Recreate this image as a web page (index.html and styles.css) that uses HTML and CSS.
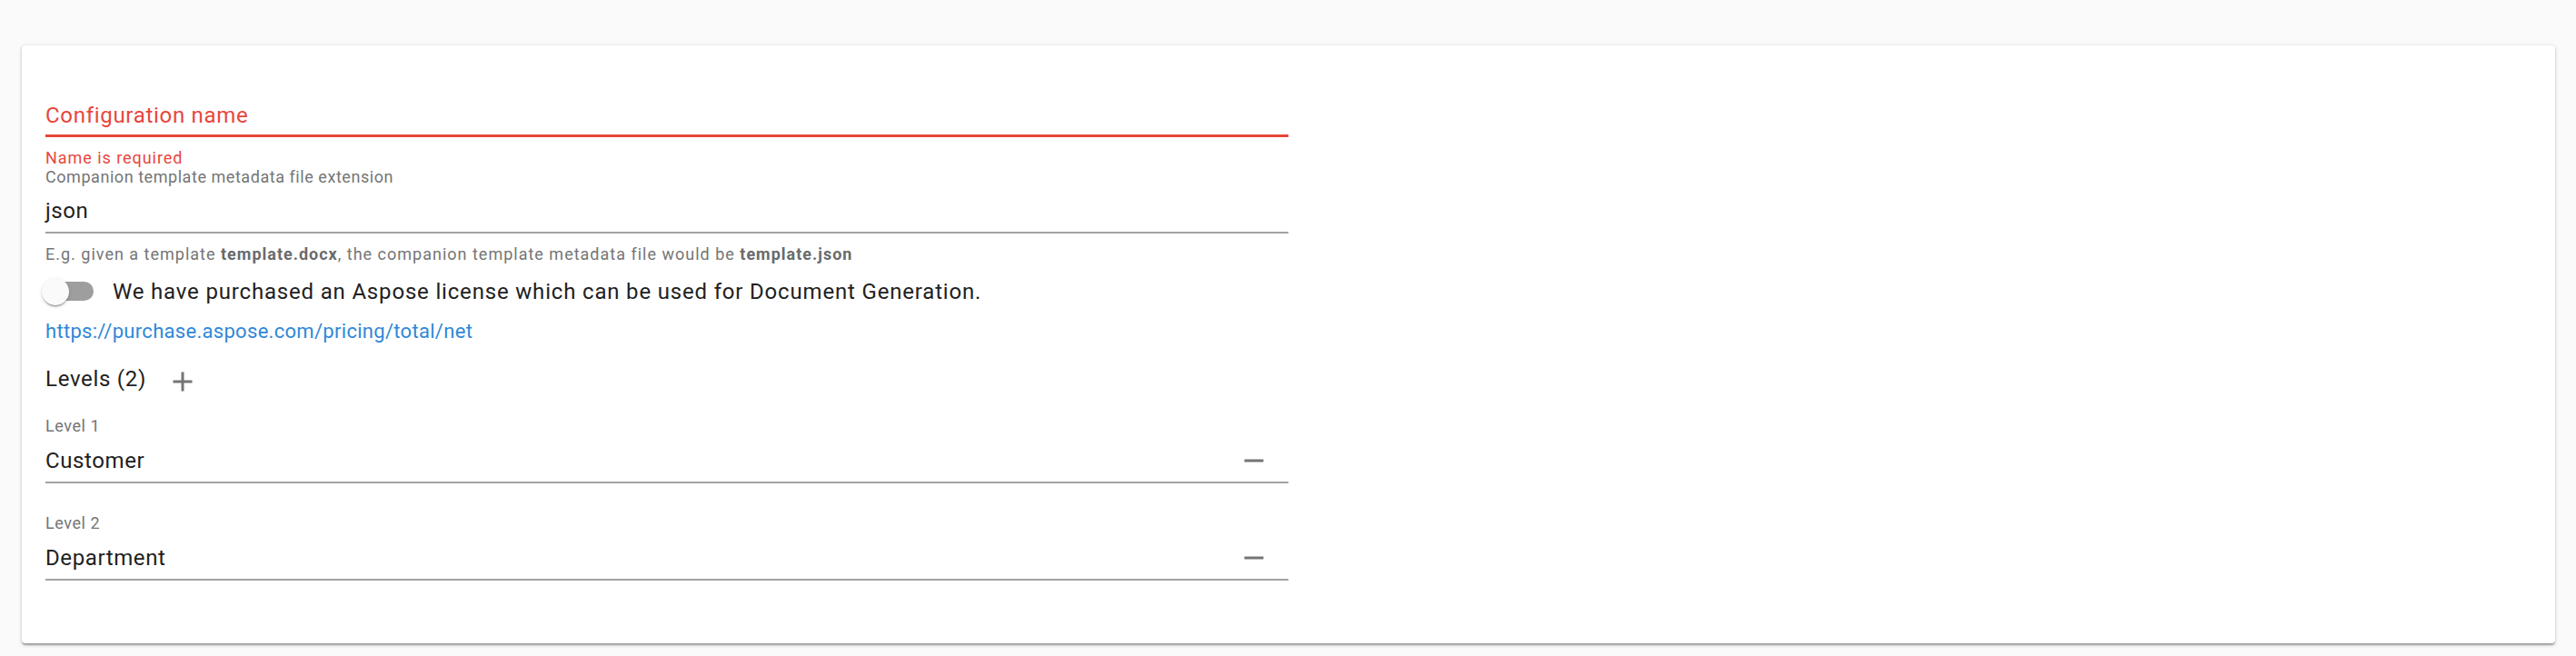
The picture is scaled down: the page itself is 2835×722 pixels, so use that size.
FILE: index.html
```html
<!DOCTYPE html>
<html lang="en">
<head>
<meta charset="utf-8">
<title>Configuration</title>
<link rel="stylesheet" href="styles.css">
</head>
<body>
<div class="page">
  <section class="card">
    <div class="field">
      <div class="input input-error">Configuration name</div>
      <div class="error-text">Name is required</div>
    </div>
    <div class="field">
      <div class="label">Companion template metadata file extension</div>
      <div class="input input-json">json</div>
      <div class="helper">E.g. given a template <b>template.docx</b>, the companion template metadata file would be <b>template.json</b></div>
    </div>
    <label class="switch-row">
      <span class="switch"><span class="track"></span><span class="thumb"></span></span>
      <span class="switch-label">We have purchased an Aspose license which can be used for Document Generation.</span>
    </label>
    <a class="link" href="#">https://purchase.aspose.com/pricing/total/net</a>
    <div class="levels-head">
      <span class="levels-title">Levels (2)</span>
      <svg class="icon icon-add" viewBox="0 0 24 24" width="36" height="36"><path d="M19 13h-6v6h-2v-6H5v-2h6V5h2v6h6v2z"/></svg>
    </div>
    <div class="level level-first">
      <div class="label">Level 1</div>
      <div class="input input-row">
        <span class="value">Customer</span>
        <svg class="icon icon-remove" viewBox="0 0 24 24" width="36" height="36"><path d="M19 13H5v-2h14v2z"/></svg>
      </div>
    </div>
    <div class="level">
      <div class="label">Level 2</div>
      <div class="input input-row">
        <span class="value">Department</span>
        <svg class="icon icon-remove" viewBox="0 0 24 24" width="36" height="36"><path d="M19 13H5v-2h14v2z"/></svg>
      </div>
    </div>
  </section>
</div>
</body>
</html>
```

FILE: styles.css
```css
* { box-sizing: border-box; }

html, body {
  margin: 0;
  padding: 0;
  background: #fafafa;
  font-family: Roboto, "Liberation Sans", Arial, sans-serif;
  color: #212121;
}

.page {
  padding: 50px 23px 14px 24px;
}

.card {
  background: #fff;
  border-radius: 4px;
  box-shadow: 0 1.5px 4.5px 0 rgba(0,0,0,0.2), 0 1.5px 1.5px 0 rgba(0,0,0,0.14), 0 3px 1.5px -1.5px rgba(0,0,0,0.12);
  padding: 62px 26px 69px 26px;
  height: 658px;
}

.field, .level {
  width: 1368px;
}

.input {
  font-size: 24px;
  line-height: 30px;
  letter-spacing: 0.6px;
  padding-bottom: 8px;
  border-bottom: 2px solid #a3a3a3;
  color: #212121;
}

.input-error {
  color: #e8463b;
  letter-spacing: 0.7px;
  padding-bottom: 6px;
  border-bottom: 3px solid #e8463b;
}

.error-text {
  margin-top: 12px;
  font-size: 18px;
  line-height: 21px;
  letter-spacing: 0.95px;
  color: #e8463b;
}

.label {
  font-size: 18px;
  line-height: 21px;
  letter-spacing: 0.55px;
  color: #757575;
}

.input-json {
  margin-top: 12px;
}

.helper {
  margin-top: 12px;
  font-size: 18px;
  line-height: 21px;
  letter-spacing: 1px;
  color: #757575;
  white-space: nowrap;
}

.helper b {
  font-weight: 700;
  color: #6a6a6a;
}

.switch-row {
  display: flex;
  align-items: center;
  margin: 2px 0 0 -17px;
  height: 57px;
}

.switch {
  position: relative;
  flex: none;
  width: 87px;
  height: 57px;
  padding: 18px;
}

.track {
  display: block;
  width: 52px;
  height: 21px;
  border-radius: 10.5px;
  background: #9e9e9e;
}

.thumb {
  position: absolute;
  left: 13px;
  top: 13.5px;
  width: 30px;
  height: 30px;
  border-radius: 50%;
  background: #fafafa;
  box-shadow: 0 3px 1.5px -1.5px rgba(0,0,0,0.2), 0 1.5px 1.5px 0 rgba(0,0,0,0.14), 0 1.5px 4.5px 0 rgba(0,0,0,0.12);
}

.switch-label {
  margin-left: 4px;
  font-size: 24px;
  line-height: 36px;
  letter-spacing: 0.82px;
  color: #212121;
}

.link {
  display: block;
  width: max-content;
  margin-top: 1px;
  font-size: 22px;
  line-height: 30px;
  letter-spacing: 0.3px;
  color: #2f88d8;
  text-decoration: none;
}

.levels-head {
  display: flex;
  align-items: flex-start;
  margin-top: 19px;
  height: 39px;
}

.levels-title {
  font-size: 24px;
  line-height: 36px;
  letter-spacing: 0.7px;
  color: #212121;
}

.icon {
  flex: none;
  fill: #757575;
}

.icon-add {
  margin: 3px 0 0 22px;
}

.level {
  margin-top: 33px;
}

.level.level-first {
  margin-top: 20px;
}

.level .input {
  margin-top: 13px;
}

.input-row {
  display: flex;
  align-items: center;
  height: 40px;
}

.input-row .value {
  flex: 1;
}

.icon-remove {
  margin-right: 20px;
}
```
